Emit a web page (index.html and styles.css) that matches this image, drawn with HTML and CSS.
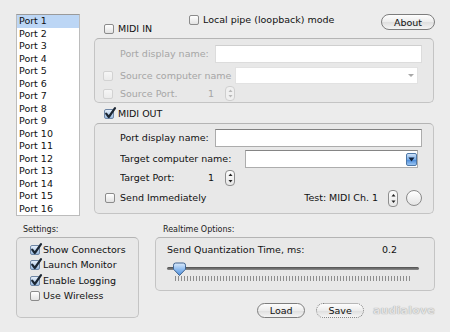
FILE: index.html
```html
<!DOCTYPE html>
<html>
<head>
<meta charset="utf-8">
<link rel="stylesheet" href="styles.css">
</head>
<body>
<div class="app">
  <div class="top">
    <ul class="ports">
      <li class="sel">Port 1</li>
      <li>Port 2</li>
      <li>Port 3</li>
      <li>Port 4</li>
      <li>Port 5</li>
      <li>Port 6</li>
      <li>Port 7</li>
      <li>Port 8</li>
      <li>Port 9</li>
      <li>Port 10</li>
      <li>Port 11</li>
      <li>Port 12</li>
      <li>Port 13</li>
      <li>Port 14</li>
      <li>Port 15</li>
      <li>Port 16</li>
    </ul>
    <div class="panel">
      <div class="head">
        <label class="cb midi-in"><span class="box"></span>MIDI IN</label>
        <label class="cb pipe"><span class="box"></span>Local pipe (loopback) mode</label>
        <button class="btn about">About</button>
      </div>
      <div class="group gin">
        <div class="row h18 plain">
          <span class="lbl w95">Port display name:</span>
          <span class="field dis f-wide"></span>
        </div>
        <div class="row h17 withbox">
          <span class="box dis"></span>
          <span class="lbl w115">Source computer name</span>
          <span class="combo dis"><span class="arr-dis"></span></span>
        </div>
        <div class="row h15 withbox">
          <span class="box dis"></span>
          <span class="lbl w88">Source Port.</span>
          <span class="num">1</span>
          <span class="stepper dis"><svg width="7" height="13" viewBox="0 0 7 13"><polygon points="3.5,2.5 1.5,5 5.5,5" fill="#b8b8b8"/><polygon points="3.5,10.5 1.5,8 5.5,8" fill="#b8b8b8"/></svg></span>
        </div>
      </div>
      <div class="outhead">
        <label class="cb"><span class="box on"><svg class="tick" width="13" height="13" viewBox="0 0 13 13"><path d="M2.2 6.6 L4.8 10 L11 1.2" fill="none" stroke="#1b2633" stroke-width="2.2" stroke-linecap="round" stroke-linejoin="round"/></svg></span>MIDI OUT</label>
      </div>
      <div class="group gout">
        <div class="row h18 plain">
          <span class="lbl w95">Port display name:</span>
          <span class="field f-wide"></span>
        </div>
        <div class="row h18 plain">
          <span class="lbl w125">Target computer name:</span>
          <span class="combo"><span class="arr-on"><svg width="7" height="5" viewBox="0 0 7 5"><polygon points="0.5,0.5 6.5,0.5 3.5,4.5" fill="#10213a"/></svg></span></span>
        </div>
        <div class="row h16 plain">
          <span class="lbl w88">Target Port:</span>
          <span class="num on">1</span>
          <span class="stepper"><svg width="7" height="14" viewBox="0 0 7 14"><polygon points="3.5,2.5 1.5,5 5.5,5" fill="#222"/><polygon points="3.5,11.5 1.5,9 5.5,9" fill="#222"/></svg></span>
        </div>
        <div class="row h14 sendrow">
          <label class="cb"><span class="box"></span>Send Immediately</label>
          <span class="test">Test: MIDI Ch. 1</span>
          <span class="stepper s2"><svg width="7" height="15" viewBox="0 0 7 15"><polygon points="3.5,3 1.5,5.5 5.5,5.5" fill="#222"/><polygon points="3.5,12 1.5,9.5 5.5,9.5" fill="#222"/></svg></span>
          <span class="circle"></span>
        </div>
      </div>
    </div>
  </div>

  <div class="bottom">
    <div class="col">
      <div class="glabel">Settings:</div>
      <div class="group settings">
        <label class="cb srow"><span class="box on"><svg class="tick" width="13" height="13" viewBox="0 0 13 13"><path d="M2.2 6.6 L4.8 10 L11 1.2" fill="none" stroke="#1b2633" stroke-width="2.2" stroke-linecap="round" stroke-linejoin="round"/></svg></span>Show Connectors</label>
        <label class="cb srow"><span class="box on"><svg class="tick" width="13" height="13" viewBox="0 0 13 13"><path d="M2.2 6.6 L4.8 10 L11 1.2" fill="none" stroke="#1b2633" stroke-width="2.2" stroke-linecap="round" stroke-linejoin="round"/></svg></span>Launch Monitor</label>
        <label class="cb srow"><span class="box on"><svg class="tick" width="13" height="13" viewBox="0 0 13 13"><path d="M2.2 6.6 L4.8 10 L11 1.2" fill="none" stroke="#1b2633" stroke-width="2.2" stroke-linecap="round" stroke-linejoin="round"/></svg></span>Enable Logging</label>
        <label class="cb srow"><span class="box"></span>Use Wireless</label>
      </div>
    </div>
    <div class="col">
      <div class="glabel">Realtime Options:</div>
      <div class="group realtime">
        <div class="qrow"><span>Send Quantization Time, ms:</span><span>0.2</span></div>
        <div class="slider">
          <div class="track"></div>
          <div class="ticks"></div>
          <svg class="thumb" style="left:5px" width="15" height="15" viewBox="0 0 15 15">
            <defs><linearGradient id="tg" x1="0" y1="0" x2="0" y2="1"><stop offset="0" stop-color="#dcebfb"/><stop offset="0.5" stop-color="#8fbcef"/><stop offset="1" stop-color="#4f8fdc"/></linearGradient></defs>
            <path d="M1.5 3.2 Q1.5 1 3.7 1 H11.3 Q13.5 1 13.5 3.2 V7.2 L7.5 13.5 L1.5 7.2 Z" fill="url(#tg)" stroke="#3f6390" stroke-width="1"/>
          </svg>
        </div>
      </div>
      <div class="buttons">
        <button class="btn load">Load</button>
        <button class="btn save">Save</button>
        <span class="mark">audialove</span>
      </div>
    </div>
  </div>
</div>
</body>
</html>
```

FILE: styles.css
```css
* { box-sizing: border-box; margin: 0; padding: 0; }
html, body { width: 450px; height: 332px; overflow: hidden; }
body {
  background: #ececec;
  font-family: "DejaVu Sans", "Liberation Sans", sans-serif;
  font-size: 9.5px;
  color: #111;
}
.app { padding: 14px 0 0 16px; }

/* top area */
.top { display: flex; gap: 14px; height: 202px; }
.ports {
  list-style: none;
  width: 64px;
  height: 202px;
  background: #fff;
  border: 1px solid #bcbcbc;
  border-top-color: #9a9a9a;
}
.ports li { height: 12.5px; line-height: 12.5px; padding-left: 2px; white-space: nowrap; }
.ports li.sel { background: #bcd6f5; }

.panel { width: 340px; display: flex; flex-direction: column; }

.head {
  display: grid;
  grid-template-columns: 85px 1fr auto;
  padding-left: 10px;
  height: 24px;
}
.midi-in { align-self: end; margin-bottom: 3px; }
.pipe { align-self: start; }
.about { align-self: start; width: 54px; height: 16px; margin-right: -1px; }

/* checkbox */
.cb { display: flex; align-items: center; gap: 4px; line-height: 12px; white-space: nowrap; }
.box {
  position: relative;
  flex: none;
  width: 10px;
  height: 10px;
  border: 1px solid #8b8b8b;
  border-radius: 2px;
  background: linear-gradient(#ffffff, #e2e2e2);
}
.box.dis { border-color: #d2d2d2; background: linear-gradient(#f6f6f6, #ebebeb); }
.box.on { background: linear-gradient(#e4eefa, #9dbde3); border-color: #6f87a6; }
.tick { position: absolute; left: -1px; top: -3px; overflow: visible; }

/* group boxes */
.group {
  border: 1px solid #c4c4c4;
  border-top-color: #b4b4b4;
  border-radius: 5px;
  background: #e8e8e8;
}
.gin { display: flex; flex-direction: column; gap: 0; padding: 6px 11px 1px 0; }
.gin .row:nth-child(2) { margin-top: 4px; }
.gin .row:nth-child(3) { margin-top: 2px; }
.gin .lbl, .gin .num { color: #a6a6a6; }

.outhead { height: 20px; display: flex; align-items: center; padding-left: 10px; padding-top: 1px; }

.gout { display: flex; flex-direction: column; padding: 5px 11px 8px 0; }
.gout .row:nth-child(2) { margin-top: 3px; }
.gout .row:nth-child(3) { margin-top: 2px; }
.gout .row:nth-child(4) { margin-top: 5px; }

.row { display: flex; align-items: center; }
.row.plain { padding-left: 25px; }
.row.withbox { padding-left: 8px; }
.row.withbox .box { margin-right: 7px; }
.h18 { height: 18px; }
.h17 { height: 17px; }
.h16 { height: 16px; }
.h15 { height: 15px; }
.h14 { height: 14px; }

.lbl { flex: none; white-space: nowrap; overflow: hidden; line-height: 12px; }
.w95 { width: 95px; }
.w115 { width: 115px; }
.w125 { width: 125px; }
.w88 { width: 88px; }

.field {
  height: 18px;
  background: #fff;
  border: 1px solid #acacac;
  border-top-color: #808080;
}
.field.dis { border-color: #dcdcdc; border-top-color: #cfcfcf; }
.f-wide { width: 207px; }

.combo {
  flex: 1;
  height: 100%;
  margin-right: 4px;
  background: #fff;
  border: 1px solid #adadad;
  border-top-color: #858585;
  display: flex;
  align-items: center;
  justify-content: flex-end;
}
.combo.dis { border-color: #e2e2e2; }
.arr-dis {
  width: 0; height: 0;
  margin-right: 3px;
  border-left: 3px solid transparent;
  border-right: 3px solid transparent;
  border-top: 3px solid #a8a8a8;
}
.arr-on {
  width: 11px;
  height: 13px;
  margin-right: 0;
  border: 1px solid #4d78a8;
  border-radius: 2px;
  background: linear-gradient(#cfe2f8, #6ea6e6 55%, #4d8ddb 56%, #9cc6f2);
  display: flex;
  align-items: center;
  justify-content: center;
}

.num { width: 17px; line-height: 12px; }
.stepper {
  flex: none;
  width: 10px;
  height: 15px;
  border: 1px solid #8e8e8e;
  border-radius: 4px;
  background: linear-gradient(#fefefe, #e6e6e6);
  display: flex;
  justify-content: center;
  align-items: center;
}
.stepper.dis { border-color: #cfcfcf; background: #f0f0f0; }
.gout .stepper { height: 16px; }
.stepper.s2 { height: 17px; margin-left: 10px; }

.sendrow { padding-left: 10px; }
.sendrow .cb { gap: 5px; }
.test { margin-left: auto; line-height: 12px; }
.circle {
  width: 16px;
  height: 16px;
  margin-left: 8px;
  border: 1px solid #8a8a8a;
  border-radius: 50%;
  background: linear-gradient(#ffffff, #e4e4e4);
}

/* buttons */
.btn {
  font-family: inherit;
  font-size: 9.5px;
  color: #111;
  border: 1px solid #7d7d7d;
  border-radius: 8px;
  background: linear-gradient(#fdfdfd, #ececec 50%, #dedede 51%, #f4f4f4);
  line-height: 13px;
  text-align: center;
}

/* bottom */
.bottom {
  display: grid;
  grid-template-columns: 123px 280px;
  column-gap: 16px;
  margin-top: 8px;
}
.col { display: flex; flex-direction: column; }
.glabel { font-size: 8px; line-height: 12px; height: 12px; margin-bottom: 1px; padding-left: 7px; color: #222; }
.col:nth-child(2) .glabel { padding-left: 8px; }

.settings { height: 81px; padding: 4px 0 0 13px; display: flex; flex-direction: column; }
.srow { height: 15.5px; gap: 3px; }

.realtime { height: 54px; padding: 5px 15px 0 11px; }
.qrow { display: flex; justify-content: space-between; line-height: 13px; height: 13px; padding-right: 22px; }
.slider { position: relative; height: 20px; margin-top: 6px; }
.track {
  position: absolute;
  left: 0; right: 0; top: 5px;
  height: 3px;
  border-radius: 2px;
  background: linear-gradient(#4e4e4e, #8c8c8c);
}
.ticks {
  position: absolute;
  left: 8px; top: 14px;
  width: 237px; height: 5px;
  background: repeating-linear-gradient(90deg, #8e8e8e 0 1px, transparent 1px 3px);
}
.thumb { position: absolute; top: 0; }

.buttons { display: flex; align-items: center; gap: 11px; margin-top: 12px; padding-left: 102px; }
.load { width: 52px; height: 15px; }
.save { width: 51px; height: 15px; border-style: dotted; }
.mark {
  margin-left: -2px;
  font-weight: bold;
  font-size: 11px;
  color: #e2e2e2;
  text-shadow: 0 0 1px #8a8a8a;
  letter-spacing: 0.2px;
}
```
